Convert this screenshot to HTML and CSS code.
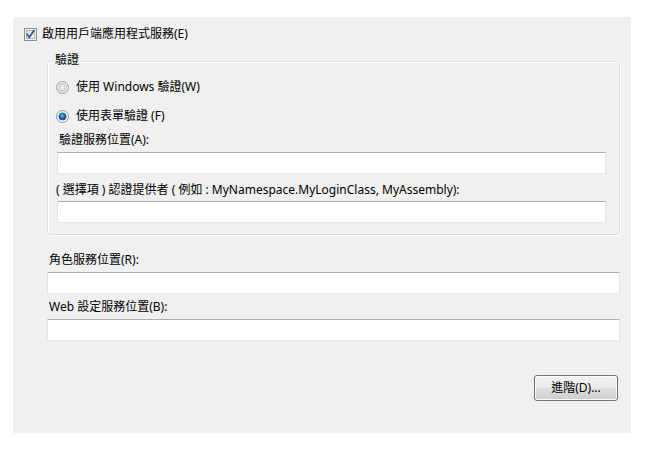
FILE: index.html
```html
<!DOCTYPE html>
<html>
<head>
<meta charset="utf-8">
<link rel="stylesheet" href="styles.css">
</head>
<body>
<div class="panel">
  <div class="check-row">
    <svg class="checkbox" width="13" height="13" viewBox="0 0 13 13">
      <defs>
        <linearGradient id="cbg" x1="0" y1="0" x2="1" y2="1">
          <stop offset="0" stop-color="#d8dde3"/>
          <stop offset="1" stop-color="#fbfbfb"/>
        </linearGradient>
      </defs>
      <rect x="0.5" y="0.5" width="12" height="12" fill="#f4f4f4" stroke="#8e8f8f"/>
      <rect x="2.5" y="2.5" width="8" height="8" fill="url(#cbg)" stroke="#b0b5bb"/>
      <path d="M3.2 6.4 L5.4 9.2 L9.8 2.8" fill="none" stroke="#3b54a0" stroke-width="1.8" stroke-linecap="square"/>
    </svg>
    <span>啟用用戶端應用程式服務(E)</span>
  </div>

  <div class="group">
    <div class="legend">驗證</div>
    <div class="radio-row first">
      <svg class="radio" width="13" height="13" viewBox="0 0 13 13">
        <defs>
          <radialGradient id="rg1" cx="0.5" cy="0.5" r="0.5">
            <stop offset="0" stop-color="#f6f6f6"/>
            <stop offset="1" stop-color="#d0d0d0"/>
          </radialGradient>
        </defs>
        <circle cx="6.5" cy="6.5" r="6" fill="#f2f2f2" stroke="#9a9a9a"/>
        <circle cx="6.5" cy="6.5" r="4" fill="url(#rg1)" stroke="#c4c4c4" stroke-width="0.8"/>
      </svg>
      <span>使用 Windows 驗證(W)</span>
    </div>
    <div class="radio-row second">
      <svg class="radio" width="13" height="13" viewBox="0 0 13 13">
        <defs>
          <radialGradient id="rg2" cx="0.45" cy="0.4" r="0.6">
            <stop offset="0" stop-color="#7ec3f2"/>
            <stop offset="0.5" stop-color="#1c76c0"/>
            <stop offset="1" stop-color="#0b3b72"/>
          </radialGradient>
        </defs>
        <circle cx="6.5" cy="6.5" r="6" fill="#f2f2f2" stroke="#8a9aa8"/>
        <circle cx="6.5" cy="6.5" r="3.6" fill="url(#rg2)" stroke="#1d4f86" stroke-width="0.6"/>
      </svg>
      <span>使用表單驗證 (F)</span>
    </div>
    <div class="label label-a">驗證服務位置(A):</div>
    <div class="textbox"></div>
    <div class="label label-b">( 選擇項 ) 認證提供者 ( 例如 : MyNamespace.MyLoginClass, MyAssembly):</div>
    <div class="textbox"></div>
  </div>

  <div class="outer-fields">
    <div class="label label-r">角色服務位置(R):</div>
    <div class="textbox wide"></div>
    <div class="label label-w">Web 設定服務位置(B):</div>
    <div class="textbox wide"></div>
  </div>

  <div class="button-row">
    <div class="button">進階(D)...</div>
  </div>
</div>
</body>
</html>
```

FILE: styles.css
```css
html, body {
  margin: 0;
  padding: 0;
  background: #ffffff;
}

body {
  font-family: "Noto Sans", "Noto Sans CJK TC", sans-serif;
  font-size: 12px;
  line-height: 16px;
  color: #000000;
}

.panel {
  margin: 17px 0 0 13px;
  width: 618px;
  height: 416px;
  background: #f0f0f0;
  padding-top: 9px;
  box-sizing: border-box;
  overflow: hidden;
}

.check-row {
  display: flex;
  align-items: center;
  height: 16px;
  margin-left: 11px;
  gap: 5px;
}

.checkbox {
  display: block;
  flex: none;
}

.group {
  margin: 19px 0 0 34px;
  width: 573px;
  box-sizing: border-box;
  border: 1px solid #d5dfe5;
  border-radius: 3px;
  box-shadow: inset 1px 1px 0 #ffffff, 1px 1px 0 #ffffff;
  padding: 0 13px 11px 8px;
}

.legend {
  width: fit-content;
  margin: -10px 0 0 -3px;
  padding: 0 2px;
  background: #f0f0f0;
  height: 16px;
}

.radio-row {
  display: flex;
  align-items: center;
  height: 16px;
  gap: 7px;
}

.radio-row.first {
  margin-top: 11px;
}

.radio-row.second {
  margin-top: 13px;
}

.radio {
  display: block;
  flex: none;
}

.label {
  height: 16px;
}

.label-a {
  margin-top: 8px;
  padding-left: 3px;
}

.label-b {
  margin-top: 8px;
}

.textbox {
  height: 22px;
  box-sizing: border-box;
  background: #ffffff;
  border: 1px solid #e2e3ea;
  border-top-color: #abadb3;
  border-bottom-color: #e3e9ef;
  border-radius: 1px;
  margin-top: 4px;
  margin-left: 1px;
}

.label-b + .textbox {
  margin-top: 3px;
}

.outer-fields {
  margin-left: 34px;
  width: 573px;
}

.label-r {
  margin-top: 17px;
  padding-left: 2px;
}

.label-w {
  margin-top: 5px;
  padding-left: 2px;
}

.textbox.wide {
  margin-left: 0;
}

.button-row {
  display: flex;
  justify-content: flex-end;
  margin-top: 34px;
  padding-right: 13px;
}

.button {
  width: 84px;
  height: 26px;
  box-sizing: border-box;
  border: 1px solid #707070;
  border-radius: 3px;
  background: linear-gradient(to bottom, #f2f2f2 0%, #ebebeb 48%, #dddddd 52%, #cfcfcf 100%);
  box-shadow: inset 0 0 0 1px #fcfcfc;
  display: flex;
  align-items: center;
  justify-content: center;
}
```
